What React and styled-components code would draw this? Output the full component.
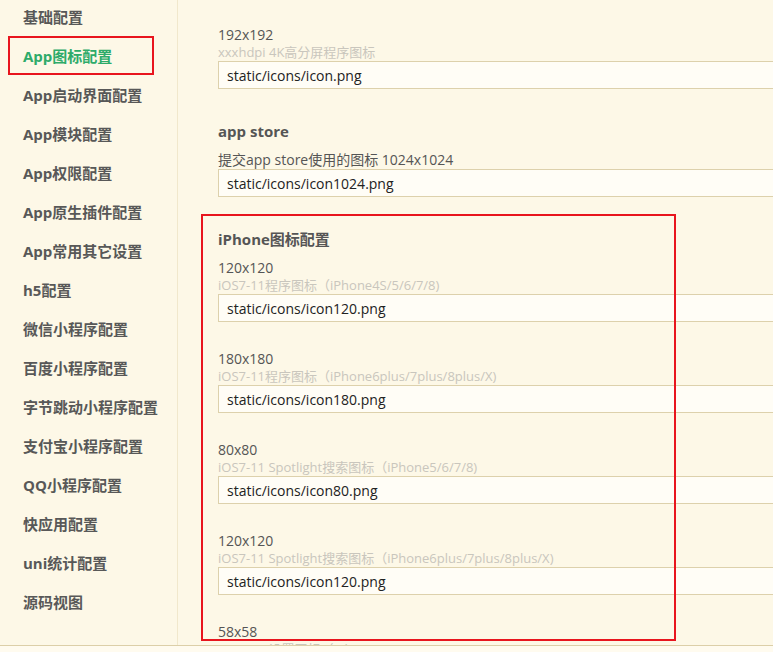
import React from "react";
import styled, { createGlobalStyle } from "styled-components";

const Global = createGlobalStyle`
  html, body { margin: 0; padding: 0; }
  body {
    background: #fdf8e7;
    font-family: "Open Sans", "Noto Sans CJK SC", sans-serif;
    overflow: hidden;
  }
`;

const Page = styled.div`
  width: 773px;
  height: 652px;
  display: flex;
  flex-direction: column;
  background: #fdf8e7;
  overflow: hidden;
`;

const Main = styled.div`
  flex: 0 0 645px;
  display: flex;
  overflow: hidden;
`;

const Footer = styled.div`
  flex: 1;
  border-top: 1px solid #dccfa8;
  background: #fffbef;
`;

const Sidebar = styled.nav`
  flex: 0 0 177px;
  border-right: 1px solid #f1e8cc;
  overflow: hidden;
`;

const Menu = styled.ul`
  list-style: none;
  margin: -3px 0 0;
  padding: 0;
`;

const MenuItem = styled.li`
  box-sizing: border-box;
  width: 146px;
  height: 39px;
  margin-left: 8px;
  padding-left: 15px;
  display: flex;
  align-items: center;
  font-size: 15px;
  font-weight: 700;
  white-space: nowrap;
  color: ${(p) => (p.$active ? "#2eab6a" : "#585858")};
  box-shadow: ${(p) => (p.$active ? "inset 0 0 0 2px #e8151e" : "none")};
`;

const Content = styled.main`
  flex: 1;
  min-width: 0;
  overflow: hidden;
  padding: 26px 0 0 40px;
`;

const Section = styled.section`
  position: relative;
  padding-top: 32px;
`;

const Highlight = styled.div`
  position: absolute;
  top: 17px;
  left: -17px;
  width: 475px;
  height: 427px;
  box-sizing: border-box;
  border: 2px solid #e8151e;
  pointer-events: none;
  z-index: 2;
`;

const Heading = styled.h3`
  margin: 0 0 ${(p) => p.$gap || 10}px;
  font-size: 15px;
  line-height: 20px;
  font-weight: 700;
  color: #555;
`;

const Field = styled.div`
  & + & {
    margin-top: 28px;
  }
`;

const Label = styled.div`
  font-size: 14px;
  line-height: 18px;
  color: #555;
  white-space: nowrap;
`;

const Hint = styled.div`
  font-size: 13px;
  line-height: 17px;
  color: #c9c6bd;
  white-space: nowrap;
`;

const Input = styled.input`
  display: block;
  box-sizing: border-box;
  width: 620px;
  height: 28px;
  margin: 0;
  padding: 0 8px;
  background: #fffdf6;
  border: 1px solid #ddd1ac;
  border-radius: 0;
  outline: none;
  font-family: "Open Sans", "Noto Sans CJK SC", sans-serif;
  font-size: 14px;
  color: #222;
`;

const menu = [
  "基础配置",
  "App图标配置",
  "App启动界面配置",
  "App模块配置",
  "App权限配置",
  "App原生插件配置",
  "App常用其它设置",
  "h5配置",
  "微信小程序配置",
  "百度小程序配置",
  "字节跳动小程序配置",
  "支付宝小程序配置",
  "QQ小程序配置",
  "快应用配置",
  "uni统计配置",
  "源码视图",
];

const iphone = [
  ["120x120", "iOS7-11程序图标（iPhone4S/5/6/7/8)", "static/icons/icon120.png"],
  ["180x180", "iOS7-11程序图标（iPhone6plus/7plus/8plus/X)", "static/icons/icon180.png"],
  ["80x80", "iOS7-11 Spotlight搜索图标（iPhone5/6/7/8)", "static/icons/icon80.png"],
  ["120x120", "iOS7-11 Spotlight搜索图标（iPhone6plus/7plus/8plus/X)", "static/icons/icon120.png"],
  ["58x58", "iOS7-11 设置图标（iPhone5/6/7/8)", "static/icons/icon58.png"],
];

function FieldRow({ label, hint, value }) {
  return (
    <Field>
      <Label>{label}</Label>
      {hint && <Hint>{hint}</Hint>}
      <Input defaultValue={value} />
    </Field>
  );
}

export default function App() {
  return (
    <>
      <Global />
      <Page>
        <Main>
          <Sidebar>
            <Menu>
              {menu.map((m) => (
                <MenuItem key={m} $active={m === "App图标配置"}>
                  {m}
                </MenuItem>
              ))}
            </Menu>
          </Sidebar>
          <Content>
            <FieldRow label="192x192" hint="xxxhdpi 4K高分屏程序图标" value="static/icons/icon.png" />
            <Section>
              <Heading $gap={10}>app store</Heading>
              <FieldRow label="提交app store使用的图标 1024x1024" value="static/icons/icon1024.png" />
            </Section>
            <Section>
              <Highlight />
              <Heading $gap={10}>iPhone图标配置</Heading>
              {iphone.map(([l, h, v], i) => (
                <FieldRow key={i} label={l} hint={h} value={v} />
              ))}
            </Section>
          </Content>
        </Main>
        <Footer />
      </Page>
    </>
  );
}
